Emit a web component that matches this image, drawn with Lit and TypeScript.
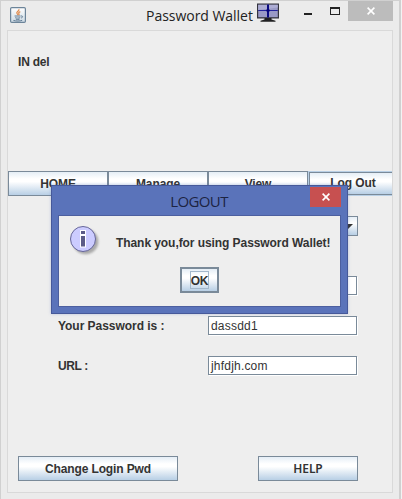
import { LitElement, html, css } from "lit";
import { customElement } from "lit/decorators.js";

const javaIcon = html`<svg class="java" width="16" height="16" viewBox="0 0 16 16">
  <defs><linearGradient id="jg" x1="0" y1="0" x2="0" y2="1"><stop offset="0" stop-color="#fff"/><stop offset="1" stop-color="#cddbe5"/></linearGradient></defs>
  <rect x=".6" y=".6" width="14.8" height="14.8" rx="1.2" fill="url(#jg)" stroke="#6c8499" stroke-width="1.2"/>
  <path d="M8.8 2.2c1.3 1.7-3.2 2.6-1.8 4.3.4.6 1 1 .9 1.8M10.3 4.6c-2 .7-1.9 1.5-1.3 2.2.4.6.1 1-.3 1.4" fill="none" stroke="#e08a4c" stroke-width="1.2"/>
  <path d="M4.6 9h6M5.2 10.7c1.4.5 3.6.5 5 0M5.8 12.2c1.2.4 2.6.4 3.8 0M3.4 13.4c2.5.8 6.6.8 8.8-.1M11 9c2-.5 2.2 1.3.2 2.1" fill="none" stroke="#57738c" stroke-width=".9"/>
</svg>`;

const monitorIcon = html`<svg class="monitor" width="22" height="19" viewBox="0 0 22 19">
  <rect x="0" y=".5" width="22" height="15" fill="#34343e"/>
  <rect x="1.2" y="1.8" width="19.6" height="12.4" fill="#9999c6"/>
  <path d="M1.2 1.8h19.6v2.6L1.2 7z" fill="#adadd4"/>
  <path d="M1.2 7.5h19.6" stroke="#22229a" stroke-width="1"/>
  <path d="M11 1.4v13" stroke="#0a0a80" stroke-width="2"/>
  <path d="M9.4 7.5h3.2" stroke="#000078" stroke-width="2"/>
  <path d="M7.5 15h7v1.4l4 1.3v1.1h-15v-1.1l4-1.3z" fill="#202022"/>
</svg>`;

const infoIcon = html`<svg class="info" width="32" height="32" viewBox="0 0 32 32">
  <defs><filter id="sh" x="-20%" y="-20%" width="150%" height="150%"><feGaussianBlur stdDeviation="1.2"/></filter></defs>
  <circle cx="15.5" cy="15.5" r="12.8" fill="#8c8c8c" opacity=".7" filter="url(#sh)"/>
  <circle cx="13" cy="13" r="12.5" fill="#ccccff" stroke="#666699" stroke-width="1"/>
  <path d="M10 4h6v5h-6zM10 9h6v12.6h-6z" fill="#fff"/>
  <path d="M11 5h4v3h-4zM11 10h4v10.5h-4z" fill="#5c5c86"/>
</svg>`;

const cross = html`<svg width="8" height="8" viewBox="0 0 8 8"><path d="M.6 .6l6.8 6.8M7.4 .6L.6 7.4" stroke="#fff" stroke-width="1.6"/></svg>`;

@customElement("app-root")
export class AppRoot extends LitElement {
  static styles = css`
    :host { display: block; width: 402px; height: 499px; overflow: hidden; background: #f3f3f3;
      font: bold 12px/15px "Liberation Sans", Arial, sans-serif; color: #333; }
    * { box-sizing: border-box; }
    svg { display: block; }
    .window { position: relative; width: 401px; height: 499px; background: #ebebeb; border: solid #d0d0d0;
      border-width: 1px 2px 0 1px; padding: 0 6px; display: flex; flex-direction: column; }
    .titlebar { height: 29px; display: flex; align-items: flex-start; flex: none; }
    .java { margin: 6px 0 0 3px; }
    .title { font: 14px/20px "Open Sans", "Noto Sans", sans-serif; color: #222; white-space: nowrap;
      margin: 5px 0 0 120px; width: 107px; letter-spacing: -.03px; }
    .monitor { margin: 2px 0 0 4px; flex: none; }
    .min { width: 8px; height: 2px; background: #222; margin: 12px 0 0 25px; }
    .max { width: 10px; height: 8px; border: 1px solid #222; border-top-width: 2px; margin: 6px 0 0 18px; }
    .close { width: 45px; height: 20px; background: #bcbcbc; margin-left: auto; display: grid; place-items: center; flex: none; }
    .client { height: 463px; width: 386px; border: 1px solid #d9d9d9; background: #eee; overflow: hidden;
      display: flex; flex-direction: column; }
    .user { height: 140px; padding: 24px 0 0 10px; letter-spacing: -.2px; flex: none; }
    .nav { display: flex; height: 25px; flex: none; }
    .btn { height: 25px; border: 1px solid #7a8a99; display: grid; place-items: center; padding-top: 1px; flex: none; white-space: nowrap;
      background: linear-gradient(#e5eef6 0%, #fff 30%, #fff 42%, #b8cfe5 100%); }
    .nav .btn { width: 100px; letter-spacing: -.1px; }
    .nav .btn.hot { margin: 1px 0 0 1px; height: 23px; box-shadow: 0 0 0 1px #b8cfe5; width: 100px; padding: 0 12px 0 0; }
    .form { padding: 20px 0 0 50px; display: flex; flex-direction: column; align-items: flex-start; flex: none; }
    .combo { width: 150px; height: 20px; border: 1px solid #7a8a99; display: flex; justify-content: flex-end; align-items: center;
      padding-right: 4px; margin: 0 0 40px 150px; background: linear-gradient(#e5eef6, #fff 35%, #b8cfe5); }
    .row { display: flex; align-items: center; height: 20px; margin-bottom: 20px; }
    .name { width: 150px; letter-spacing: -.04px; padding-top: 1px; }
    .name.short { letter-spacing: -.4px; }
    .field { width: 149px; height: 19px; background: #fff; border: 1px solid #7a8a99; box-shadow: 1px 1px #fff;
      font-weight: normal; line-height: 17px; padding: 1px 0 0 2px; letter-spacing: .2px; margin-top: -1px; }
    .actions { display: flex; justify-content: space-between; width: 340px; margin: 60px 0 0 10px; }
    .wide { width: 160px; letter-spacing: -.13px; padding: 1px 0 0; }
    .help { width: 100px; font-family: "Noto Sans", sans-serif; font-weight: 600; letter-spacing: -.1px; padding: 0; }
    .dialog { position: absolute; left: 50px; top: 184px; width: 297px; height: 129px; background: #5a73ba; border: 1px solid #46599a;
      padding: 0 6px 6px; display: flex; flex-direction: column; box-shadow: 0 0 3px rgba(90,115,186,.35); }
    .bar { height: 29px; display: flex; flex: none; }
    .caption { text-align: center; font: 15px/20px "Open Sans", "Noto Sans", sans-serif; color: #1d2442;
      margin-top: 5px; letter-spacing: -.6px; padding-left: 30px; flex: 1; }
    .red { width: 31px; height: 20px; background: #c75050; display: grid; place-items: center; margin-top: 1px; }
    .body { height: 93px; border: 1px solid #4c5f9f; background: #eee; display: flex; flex-direction: column; align-items: center; }
    .message { display: flex; align-self: stretch; padding: 10px 0 0 11px; height: 51px; }
    .text { margin: 10px 0 0 14px; white-space: nowrap; letter-spacing: -.07px; }
    .ok { width: 39px; height: 26px; border: 2px solid #7a8a99; display: grid; place-items: center;
      background: linear-gradient(#e5eef6 0%, #fff 30%, #fff 42%, #b8cfe5 100%); }
    .focus { border: 1px solid #a3b8cc; width: 19px; height: 18px; line-height: 18px; display: flex; justify-content: center; letter-spacing: -.3px; }
  `;

  render() {
    return html`
      <div class="window">
        <div class="titlebar">
          ${javaIcon}
          <div class="title">Password Wallet</div>
          ${monitorIcon}
          <div class="min"></div>
          <div class="max"></div>
          <div class="close">${cross}</div>
        </div>
        <div class="client">
          <div class="user">IN del</div>
          <div class="nav">
            <div class="btn">HOME</div><div class="btn">Manage</div><div class="btn">View</div><div class="btn hot">Log Out</div>
          </div>
          <div class="form">
            <div class="combo"><svg width="10" height="5" viewBox="0 0 10 5"><path d="M0 0h10L5 5z" fill="#333"/></svg></div>
            <div class="row"><div class="name"></div><div class="field"></div></div>
            <div class="row"><div class="name">Your Password is :</div><div class="field">dassdd1</div></div>
            <div class="row"><div class="name short">URL :</div><div class="field">jhfdjh.com</div></div>
          </div>
          <div class="actions"><div class="btn wide">Change Login Pwd</div><div class="btn help">HELP</div></div>
        </div>
        <div class="dialog">
          <div class="bar"><div class="caption">LOGOUT</div><div class="red">${cross}</div></div>
          <div class="body">
            <div class="message">${infoIcon}<div class="text">Thank you,for using Password Wallet!</div></div>
            <div class="ok"><div class="focus">OK</div></div>
          </div>
        </div>
      </div>`;
  }
}
